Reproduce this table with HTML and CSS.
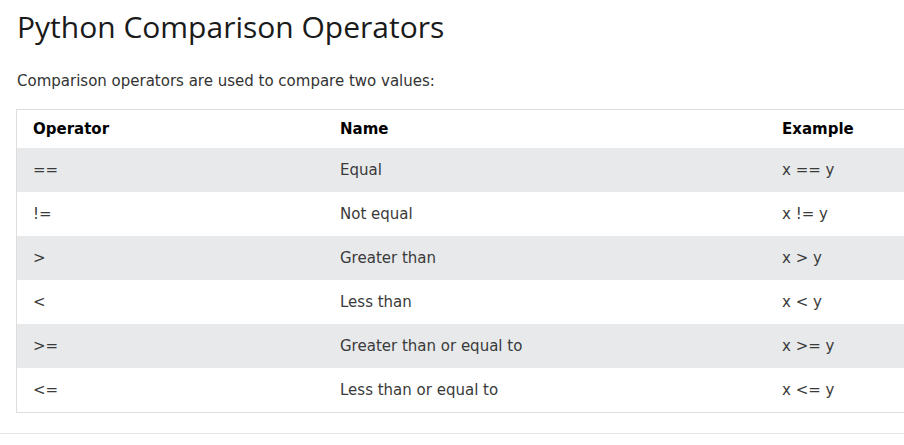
FILE: index.html
```html
<!DOCTYPE html>
<html>
<head>
<meta charset="utf-8">
<link rel="stylesheet" href="styles.css">
</head>
<body>
<div class="page">
  <h1 class="title">Python Comparison Operators</h1>
  <p class="intro">Comparison operators are used to compare two values:</p>
  <table class="ops">
    <thead>
      <tr><th class="c1">Operator</th><th class="c2">Name</th><th class="c3">Example</th></tr>
    </thead>
    <tbody>
      <tr><td>==</td><td>Equal</td><td>x == y</td></tr>
      <tr><td>!=</td><td>Not equal</td><td>x != y</td></tr>
      <tr><td>&gt;</td><td>Greater than</td><td>x &gt; y</td></tr>
      <tr><td>&lt;</td><td>Less than</td><td>x &lt; y</td></tr>
      <tr><td>&gt;=</td><td>Greater than or equal to</td><td>x &gt;= y</td></tr>
      <tr><td>&lt;=</td><td>Less than or equal to</td><td>x &lt;= y</td></tr>
    </tbody>
  </table>
  <div class="rule"></div>
</div>
</body>
</html>
```
FILE: styles.css
```css
html, body {
  margin: 0;
  padding: 0;
  background: #ffffff;
  overflow: hidden;
}
.page {
  padding-left: 16px;
  width: 1000px;
}
.title {
  font-family: "Open Sans", sans-serif;
  font-weight: 400;
  font-size: 30px;
  color: #1a1a1a;
  margin: 0;
  padding-top: 5px;
  line-height: 44px;
  padding-left: 1px;
}
.intro {
  font-family: "DejaVu Sans", Verdana, sans-serif;
  font-size: 15px;
  color: #333;
  margin: 23px 0 0 1px;
  line-height: 18px;
}
.ops {
  margin-top: 19px;
  border-collapse: collapse;
  border: 1px solid #dddddd;
  width: 1000px;
  font-family: "DejaVu Sans", Verdana, sans-serif;
  font-size: 15px;
}
.ops th {
  text-align: left;
  font-weight: 700;
  color: #000;
  height: 38px;
  padding: 0 0 0 16px;
}
.ops td {
  color: #3a3a3a;
  height: 44px;
  padding: 0 0 0 16px;
}
.ops tbody tr:nth-child(odd) {
  background: #e7e9eb;
}
.c1 { width: 291px; }
.c2 { width: 426px; }
.rule {
  margin-left: -16px;
  margin-top: 20px;
  height: 1px;
  background: #e6e6e6;
  width: 1000px;
}
```
